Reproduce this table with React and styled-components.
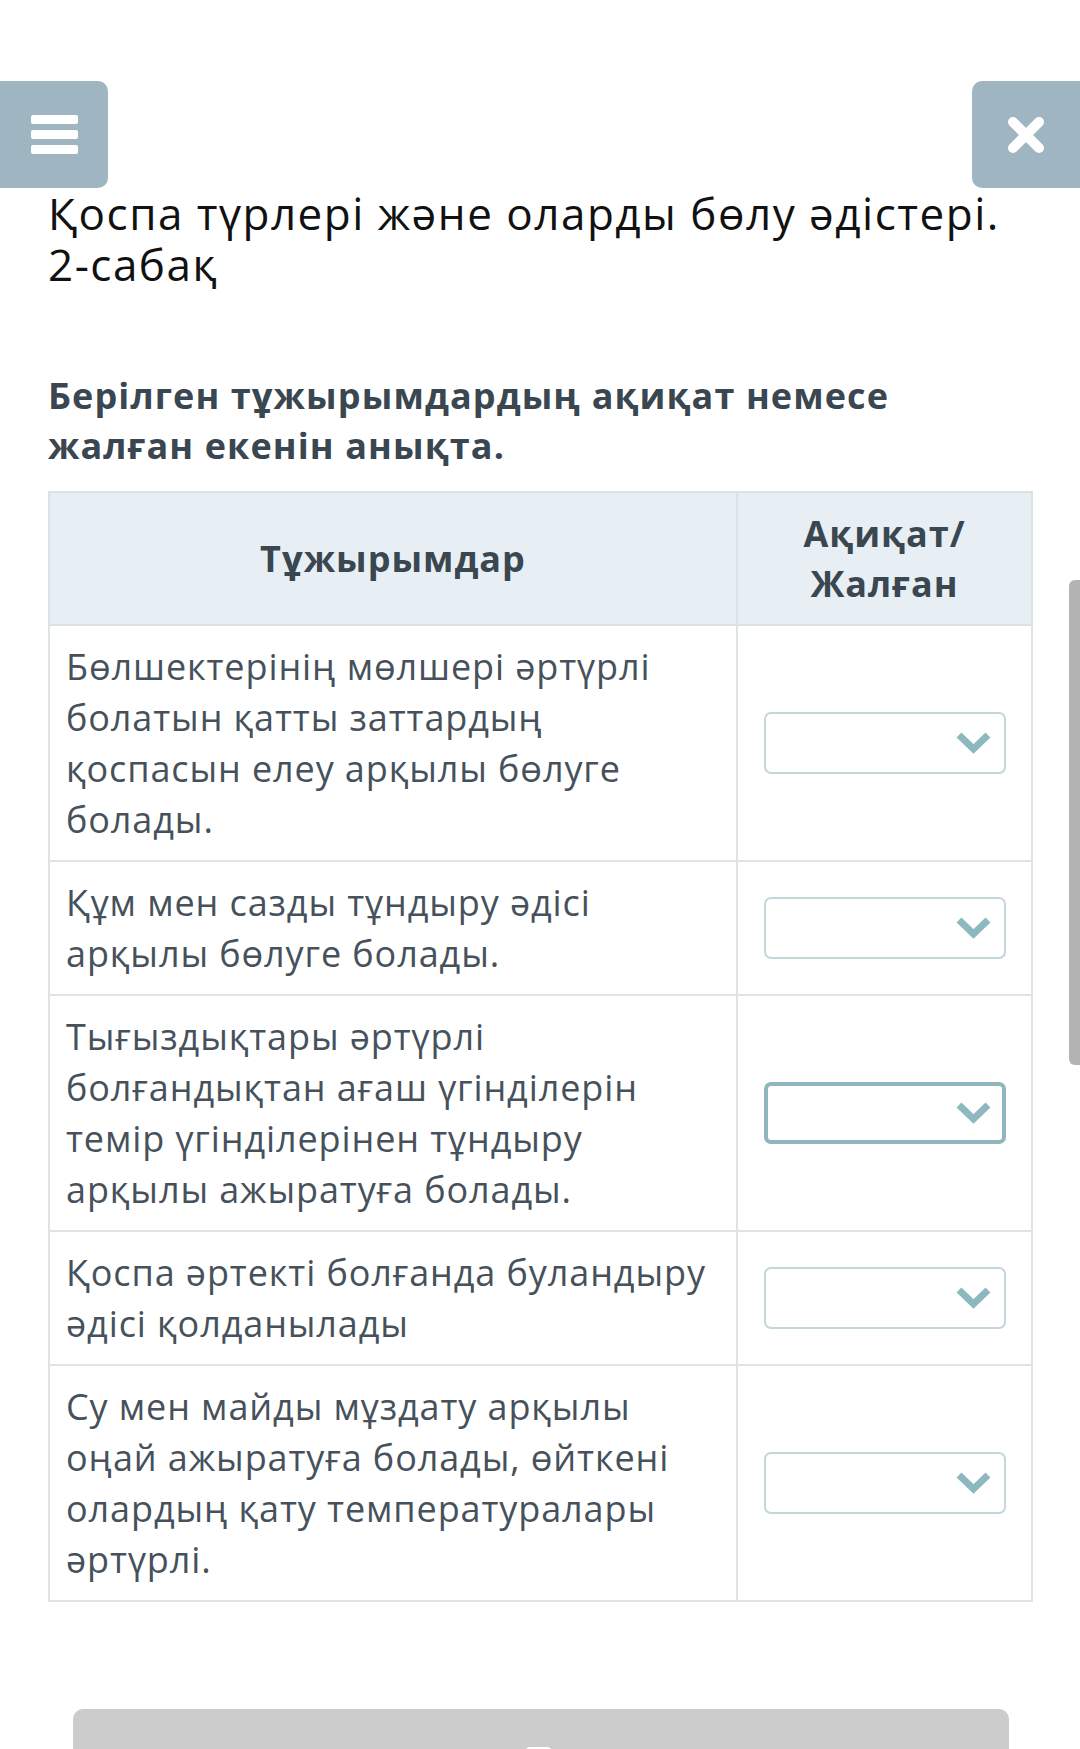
import React from 'react';
import styled, {createGlobalStyle} from 'styled-components';

const GlobalStyle = createGlobalStyle`
  html, body {
    margin: 0;
    padding: 0;
    background: #fff;
    font-family: "Open Sans", "Noto Sans", sans-serif;
    overflow: hidden;
  }
`;

const Page = styled.div`
  position: relative;
  height: 1749px;
  padding-top: 81px;
  box-sizing: border-box;
`;

const TopBar = styled.div`
  display: flex;
  justify-content: space-between;
  height: 107px;
`;

const SideButton = styled.div`
  width: 108px;
  height: 107px;
  background: #a0b5c2;
  display: flex;
  align-items: center;
  justify-content: center;
  border-radius: ${props => props.side === 'left' ? '0 10px 10px 0' : '10px 0 0 10px'};
`;

const Bars = styled.div`
  display: flex;
  flex-direction: column;
  gap: 6px;
  width: 47px;
  & > span {
    display: block;
    height: 9px;
    background: #fff;
    border-radius: 2px;
  }
`;

const Content = styled.div`
  padding: 0 47px 0 48px;
`;

const Title = styled.h1`
  margin: 0;
  font-size: 44px;
  line-height: 51px;
  font-weight: 400;
  letter-spacing: 1.5px;
  color: #111;
`;

const Instruction = styled.p`
  margin: 81px 0 0;
  font-size: 36px;
  line-height: 50px;
  font-weight: 700;
  letter-spacing: 1.1px;
  color: #3a4650;
`;

const Table = styled.table`
  margin-top: 20px;
  width: 985px;
  border-collapse: collapse;
  border: 2px solid #dde3e6;
`;

const HeadCell = styled.th`
  background: #e8eff4;
  border: 2px solid #dbe2e6;
  height: 133px;
  padding: 0 16px;
  font-size: 36px;
  line-height: 50px;
  font-weight: 700;
  letter-spacing: 1px;
  color: #3a4650;
  text-align: center;
  width: ${props => props.w || 'auto'};
  box-sizing: border-box;
`;

const Cell = styled.td`
  border: 2px solid #dde3e6;
  padding: 15px 16px;
  font-size: 36px;
  line-height: 51px;
  letter-spacing: 0.9px;
  color: #46515b;
  vertical-align: middle;
  text-align: ${props => props.center ? 'center' : 'left'};
`;

const Select = styled.div`
  width: 242px;
  height: 62px;
  margin: 0 auto;
  box-sizing: border-box;
  border: ${props => props.focused ? '4px solid #8fb5bd' : '2px solid #c3d7db'};
  border-radius: 7px;
  display: flex;
  align-items: center;
  justify-content: flex-end;
  padding-right: ${props => props.focused ? '11px' : '13px'};
  background: #fff;
`;

const Scrollbar = styled.div`
  position: absolute;
  right: 0;
  top: 580px;
  width: 11px;
  height: 485px;
  background: #b3b3b3;
  border-radius: 6px 0 0 6px;
`;

const Footer = styled.div`
  margin: 107px 0 0 25px;
  width: 936px;
  height: 60px;
  background: #cccccc;
  border-radius: 10px 10px 0 0;
  display: flex;
  justify-content: center;
  padding-top: 38px;
  box-sizing: border-box;
`;

const FooterMark = styled.span`
  width: 27px;
  height: 12px;
  background: #fff;
  border-radius: 5px 5px 0 0;
  margin-left: -6px;
`;

const Chevron = () => (
  <svg width="35" height="24" viewBox="0 0 35 24">
    <polyline points="3,4 17.5,18 32,4" fill="none" stroke="#8db8c0" strokeWidth="7" strokeLinejoin="miter" />
  </svg>
);

const CloseIcon = () => (
  <svg width="40" height="38" viewBox="0 0 40 38">
    <g stroke="#fff" strokeWidth="10" strokeLinecap="round">
      <line x1="7" y1="6" x2="33" y2="32" />
      <line x1="33" y1="6" x2="7" y2="32" />
    </g>
  </svg>
);

const rows = [
  {text: 'Бөлшектерінің мөлшері әртүрлі болатын қатты заттардың қоспасын елеу арқылы бөлуге болады.'},
  {text: 'Құм мен сазды тұндыру әдісі арқылы бөлуге болады.'},
  {text: 'Тығыздықтары әртүрлі болғандықтан ағаш үгінділерін темір үгінділерінен тұндыру арқылы ажыратуға болады.', focused: true},
  {text: 'Қоспа әртекті болғанда буландыру әдісі қолданылады'},
  {text: 'Су мен майды мұздату арқылы оңай ажыратуға болады, өйткені олардың қату температуралары әртүрлі.'},
];

export default function App() {
  return (
    <Page>
      <GlobalStyle />
      <TopBar>
        <SideButton side="left">
          <Bars><span /><span /><span /></Bars>
        </SideButton>
        <SideButton side="right">
          <CloseIcon />
        </SideButton>
      </TopBar>
      <Content>
        <Title>Қоспа түрлері және оларды бөлу әдістері. 2-сабақ</Title>
        <Instruction>Берілген тұжырымдардың ақиқат немесе жалған екенін анықта.</Instruction>
        <Table>
          <thead>
            <tr>
              <HeadCell w="688px">Тұжырымдар</HeadCell>
              <HeadCell>Ақиқат/<br />Жалған</HeadCell>
            </tr>
          </thead>
          <tbody>
            {rows.map((r, i) => (
              <tr key={i}>
                <Cell>{r.text}</Cell>
                <Cell center>
                  <Select focused={r.focused}><Chevron /></Select>
                </Cell>
              </tr>
            ))}
          </tbody>
        </Table>
        <Footer><FooterMark /></Footer>
      </Content>
      <Scrollbar />
    </Page>
  );
}
